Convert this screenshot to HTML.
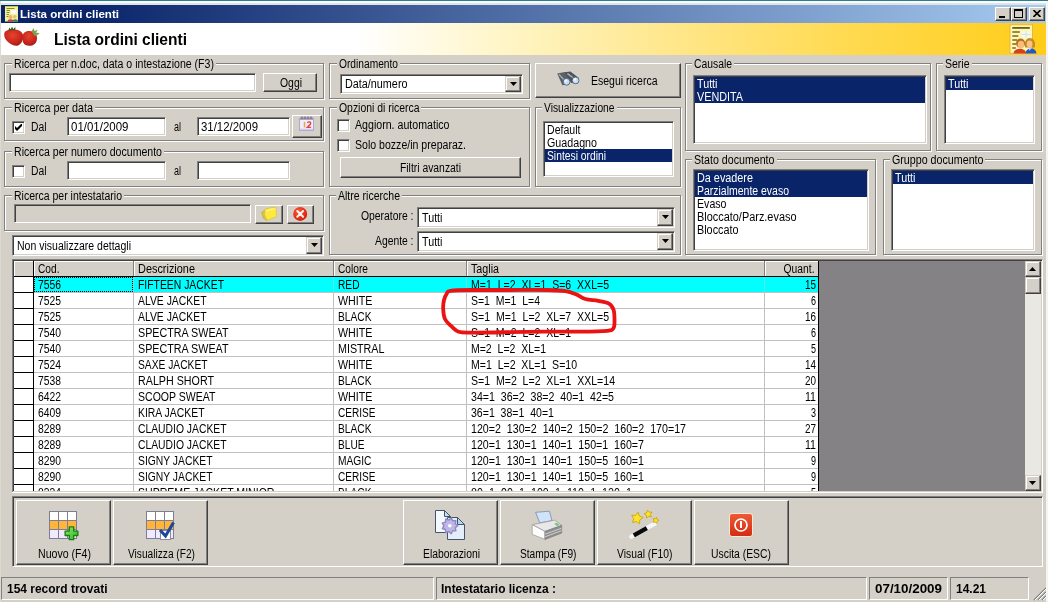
<!DOCTYPE html>
<html><head><meta charset="utf-8"><title>Lista ordini clienti</title>
<style>
html,body{margin:0;padding:0;background:#d4d0c8;}
#w{will-change:transform;position:relative;width:1048px;height:602px;overflow:hidden;font:12.5px 'Liberation Sans',sans-serif;}
#w div,#w svg,#w span.t{position:absolute;box-sizing:border-box;}
#w span.t{white-space:pre;line-height:16px;height:16px;}
</style></head><body><div id="w">
<div style="left:0px;top:0px;width:1048px;height:602px;background:#d4d0c8;"></div>
<div style="left:0px;top:0px;width:1048px;height:1px;background:#2b7f8c;"></div>
<div style="left:0px;top:1px;width:1048px;height:2px;background:#fbfcfd;"></div>
<div style="left:0px;top:3px;width:1048px;height:2px;background:#dfe4ea;"></div>
<div style="left:0px;top:1px;width:1px;height:601px;background:#dcdad2;"></div>
<div style="left:1046px;top:1px;width:2px;height:601px;background:#f4f4f0;"></div>
<div style="left:1px;top:5px;width:1045px;height:18px;background:linear-gradient(90deg,#0a246a 0%,#0a246a 8%,#a6caf0 100%);"></div>
<span class="t" style="left:20px;transform-origin:0 0;top:8.00px;font:bold 11px 'Liberation Sans',sans-serif;color:#fff;transform:scaleX(1.0518)">Lista ordini clienti</span>
<div style="left:1px;top:23px;width:1045px;height:32px;background:linear-gradient(90deg,#fff 0%,#fff 34%,#fff4c0 50%,#ffe688 65%,#ffdb54 80%,#ffcd18 100%);"></div>
<span class="t" style="left:54px;transform-origin:0 0;top:31.00px;font:bold 16px 'Liberation Sans',sans-serif;color:#000;transform:scaleX(0.9715)">Lista ordini clienti</span>
<div style="left:4px;top:63px;width:320px;height:36px;border:1px solid #808080;box-shadow:inset 1px 1px 0 #fff,1px 1px 0 #fff;"></div>
<div style="left:11.5px;top:57px;width:204.0px;height:14px;background:#d4d0c8;"></div>
<span class="t" style="left:13.5px;transform-origin:0 0;top:57.00px;font:normal 12.5px 'Liberation Sans',sans-serif;color:#000;transform:scaleX(0.8466)">Ricerca per n.doc, data o intestazione (F3)</span>
<div style="left:9px;top:73px;width:247px;height:19px;border:1px solid;border-color:#808080 #fff #fff #808080;box-shadow:inset 1px 1px 0 #404040,inset -1px -1px 0 #d4d0c8;background:#fff;"></div>
<div style="left:263px;top:73px;width:54px;height:19px;border:1px solid;border-color:#fff #404040 #404040 #fff;box-shadow:inset -1px -1px 0 #808080,inset 1px 1px 0 #d4d0c8;background:#d4d0c8;"></div>
<span class="t" style="left:280px;transform-origin:0 0;top:76.00px;font:normal 12.5px 'Liberation Sans',sans-serif;color:#000;transform:scaleX(0.8331)">Oggi</span>
<div style="left:4px;top:107px;width:320px;height:34px;border:1px solid #808080;box-shadow:inset 1px 1px 0 #fff,1px 1px 0 #fff;"></div>
<div style="left:11.5px;top:101px;width:83.0px;height:14px;background:#d4d0c8;"></div>
<span class="t" style="left:13.5px;transform-origin:0 0;top:101.00px;font:normal 12.5px 'Liberation Sans',sans-serif;color:#000;transform:scaleX(0.8613)">Ricerca per data</span>
<div style="left:12px;top:121px;width:13px;height:13px;border:1px solid;border-color:#808080 #fff #fff #808080;box-shadow:inset 1px 1px 0 #404040,inset -1px -1px 0 #d4d0c8;background:#fff;"></div>
<svg style="left:15px;top:124px" width="7" height="7"><path d="M0 2v3l2 2 5-5V-1L2 4z" fill="#000"/></svg>
<span class="t" style="left:30.5px;transform-origin:0 0;top:120.00px;font:normal 12.5px 'Liberation Sans',sans-serif;color:#000;transform:scaleX(0.8260)">Dal</span>
<div style="left:67px;top:117px;width:99px;height:19px;border:1px solid;border-color:#808080 #fff #fff #808080;box-shadow:inset 1px 1px 0 #404040,inset -1px -1px 0 #d4d0c8;background:#fff;"></div>
<span class="t" style="left:71px;transform-origin:0 0;top:120.00px;font:normal 12.5px 'Liberation Sans',sans-serif;color:#000;transform:scaleX(0.9191)">01/01/2009</span>
<span class="t" style="left:174px;transform-origin:0 0;top:120.00px;font:normal 12.5px 'Liberation Sans',sans-serif;color:#000;transform:scaleX(0.7191)">al</span>
<div style="left:197px;top:117px;width:93px;height:19px;border:1px solid;border-color:#808080 #fff #fff #808080;box-shadow:inset 1px 1px 0 #404040,inset -1px -1px 0 #d4d0c8;background:#fff;"></div>
<span class="t" style="left:201px;transform-origin:0 0;top:120.00px;font:normal 12.5px 'Liberation Sans',sans-serif;color:#000;transform:scaleX(0.9111)">31/12/2009</span>
<div style="left:292px;top:115px;width:30px;height:23px;border:1px solid;border-color:#fff #404040 #404040 #fff;box-shadow:inset -1px -1px 0 #808080,inset 1px 1px 0 #d4d0c8;background:#d4d0c8;"></div>
<div style="left:4px;top:151px;width:320px;height:36px;border:1px solid #808080;box-shadow:inset 1px 1px 0 #fff,1px 1px 0 #fff;"></div>
<div style="left:11.5px;top:145px;width:152.0px;height:14px;background:#d4d0c8;"></div>
<span class="t" style="left:13.5px;transform-origin:0 0;top:145.00px;font:normal 12.5px 'Liberation Sans',sans-serif;color:#000;transform:scaleX(0.8453)">Ricerca per numero documento</span>
<div style="left:12px;top:165px;width:13px;height:13px;border:1px solid;border-color:#808080 #fff #fff #808080;box-shadow:inset 1px 1px 0 #404040,inset -1px -1px 0 #d4d0c8;background:#fff;"></div>
<span class="t" style="left:30.5px;transform-origin:0 0;top:164.00px;font:normal 12.5px 'Liberation Sans',sans-serif;color:#000;transform:scaleX(0.8260)">Dal</span>
<div style="left:67px;top:161px;width:99px;height:19px;border:1px solid;border-color:#808080 #fff #fff #808080;box-shadow:inset 1px 1px 0 #404040,inset -1px -1px 0 #d4d0c8;background:#fff;"></div>
<span class="t" style="left:174px;transform-origin:0 0;top:164.00px;font:normal 12.5px 'Liberation Sans',sans-serif;color:#000;transform:scaleX(0.7191)">al</span>
<div style="left:197px;top:161px;width:93px;height:19px;border:1px solid;border-color:#808080 #fff #fff #808080;box-shadow:inset 1px 1px 0 #404040,inset -1px -1px 0 #d4d0c8;background:#fff;"></div>
<div style="left:4px;top:195px;width:320px;height:36px;border:1px solid #808080;box-shadow:inset 1px 1px 0 #fff,1px 1px 0 #fff;"></div>
<div style="left:11.5px;top:189px;width:112.0px;height:14px;background:#d4d0c8;"></div>
<span class="t" style="left:13.5px;transform-origin:0 0;top:189.00px;font:normal 12.5px 'Liberation Sans',sans-serif;color:#000;transform:scaleX(0.8403)">Ricerca per intestatario</span>
<div style="left:14px;top:204px;width:237px;height:19px;border:1px solid;border-color:#808080 #fff #fff #808080;box-shadow:inset 1px 1px 0 #404040,inset -1px -1px 0 #d4d0c8;background:#d4d0c8;"></div>
<div style="left:255px;top:205px;width:28px;height:19px;border:1px solid;border-color:#fff #404040 #404040 #fff;box-shadow:inset -1px -1px 0 #808080,inset 1px 1px 0 #d4d0c8;background:#d4d0c8;"></div>
<div style="left:287px;top:205px;width:27px;height:19px;border:1px solid;border-color:#fff #404040 #404040 #fff;box-shadow:inset -1px -1px 0 #808080,inset 1px 1px 0 #d4d0c8;background:#d4d0c8;"></div>
<div style="left:12px;top:235px;width:312px;height:21px;border:1px solid;border-color:#808080 #fff #fff #808080;box-shadow:inset 1px 1px 0 #404040,inset -1px -1px 0 #d4d0c8;background:#fff;"></div>
<div style="left:306px;top:237px;width:16px;height:17px;border:1px solid;border-color:#d4d0c8 #404040 #404040 #d4d0c8;box-shadow:inset -1px -1px 0 #808080,inset 1px 1px 0 #fff;background:#d4d0c8;"></div>
<svg style="left:311px;top:243px" width="7" height="4"><path d="M0 0h7L3.5 4z" fill="#000"/></svg>
<span class="t" style="left:16.5px;transform-origin:0 0;top:239.00px;font:normal 12.5px 'Liberation Sans',sans-serif;color:#000;transform:scaleX(0.8413)">Non visualizzare dettagli</span>
<div style="left:329px;top:63px;width:201px;height:36px;border:1px solid #808080;box-shadow:inset 1px 1px 0 #fff,1px 1px 0 #fff;"></div>
<div style="left:336.5px;top:57px;width:63.0px;height:14px;background:#d4d0c8;"></div>
<span class="t" style="left:338.5px;transform-origin:0 0;top:57.00px;font:normal 12.5px 'Liberation Sans',sans-serif;color:#000;transform:scaleX(0.8164)">Ordinamento</span>
<div style="left:340px;top:74px;width:183px;height:20px;border:1px solid;border-color:#808080 #fff #fff #808080;box-shadow:inset 1px 1px 0 #404040,inset -1px -1px 0 #d4d0c8;background:#fff;"></div>
<div style="left:505px;top:76px;width:16px;height:16px;border:1px solid;border-color:#d4d0c8 #404040 #404040 #d4d0c8;box-shadow:inset -1px -1px 0 #808080,inset 1px 1px 0 #fff;background:#d4d0c8;"></div>
<svg style="left:510px;top:82px" width="7" height="4"><path d="M0 0h7L3.5 4z" fill="#000"/></svg>
<span class="t" style="left:344.5px;transform-origin:0 0;top:77.00px;font:normal 12.5px 'Liberation Sans',sans-serif;color:#000;transform:scaleX(0.8649)">Data/numero</span>
<div style="left:535px;top:63px;width:146px;height:35px;border:1px solid;border-color:#fff #404040 #404040 #fff;box-shadow:inset -1px -1px 0 #808080,inset 1px 1px 0 #d4d0c8;background:#d4d0c8;"></div>
<span class="t" style="left:590.5px;transform-origin:0 0;top:74.00px;font:normal 12.5px 'Liberation Sans',sans-serif;color:#000;transform:scaleX(0.8396)">Esegui ricerca</span>
<div style="left:329px;top:107px;width:201px;height:80px;border:1px solid #808080;box-shadow:inset 1px 1px 0 #fff,1px 1px 0 #fff;"></div>
<div style="left:336.5px;top:101px;width:84.5px;height:14px;background:#d4d0c8;"></div>
<span class="t" style="left:338.5px;transform-origin:0 0;top:101.00px;font:normal 12.5px 'Liberation Sans',sans-serif;color:#000;transform:scaleX(0.8335)">Opzioni di ricerca</span>
<div style="left:337px;top:119px;width:13px;height:13px;border:1px solid;border-color:#808080 #fff #fff #808080;box-shadow:inset 1px 1px 0 #404040,inset -1px -1px 0 #d4d0c8;background:#fff;"></div>
<span class="t" style="left:355px;transform-origin:0 0;top:118.00px;font:normal 12.5px 'Liberation Sans',sans-serif;color:#000;transform:scaleX(0.8499)">Aggiorn. automatico</span>
<div style="left:337px;top:139px;width:13px;height:13px;border:1px solid;border-color:#808080 #fff #fff #808080;box-shadow:inset 1px 1px 0 #404040,inset -1px -1px 0 #d4d0c8;background:#fff;"></div>
<span class="t" style="left:355px;transform-origin:0 0;top:138.00px;font:normal 12.5px 'Liberation Sans',sans-serif;color:#000;transform:scaleX(0.8451)">Solo bozze/in preparaz.</span>
<div style="left:340px;top:157px;width:181px;height:21px;border:1px solid;border-color:#fff #404040 #404040 #fff;box-shadow:inset -1px -1px 0 #808080,inset 1px 1px 0 #d4d0c8;background:#d4d0c8;"></div>
<span class="t" style="left:399.5px;transform-origin:0 0;top:161.00px;font:normal 12.5px 'Liberation Sans',sans-serif;color:#000;transform:scaleX(0.8283)">Filtri avanzati</span>
<div style="left:535px;top:107px;width:146px;height:80px;border:1px solid #808080;box-shadow:inset 1px 1px 0 #fff,1px 1px 0 #fff;"></div>
<div style="left:542.0px;top:101px;width:74.5px;height:14px;background:#d4d0c8;"></div>
<span class="t" style="left:544.0px;transform-origin:0 0;top:101.00px;font:normal 12.5px 'Liberation Sans',sans-serif;color:#000;transform:scaleX(0.8204)">Visualizzazione</span>
<div style="left:543px;top:121px;width:131px;height:56px;border:1px solid;border-color:#808080 #fff #fff #808080;box-shadow:inset 1px 1px 0 #404040,inset -1px -1px 0 #d4d0c8;background:#fff;"></div>
<span class="t" style="left:547.0px;transform-origin:0 0;top:123.00px;font:normal 12.5px 'Liberation Sans',sans-serif;color:#000;transform:scaleX(0.8458)">Default</span>
<span class="t" style="left:547.0px;transform-origin:0 0;top:136.00px;font:normal 12.5px 'Liberation Sans',sans-serif;color:#000;transform:scaleX(0.8563)">Guadagno</span>
<div style="left:545px;top:149px;width:127px;height:13px;background:#0a246a;"></div>
<span class="t" style="left:547.0px;transform-origin:0 0;top:149.00px;font:normal 12.5px 'Liberation Sans',sans-serif;color:#fff;transform:scaleX(0.8243)">Sintesi ordini</span>
<div style="left:329px;top:195px;width:352px;height:60px;border:1px solid #808080;box-shadow:inset 1px 1px 0 #fff,1px 1px 0 #fff;"></div>
<div style="left:335.5px;top:189px;width:66.0px;height:14px;background:#d4d0c8;"></div>
<span class="t" style="left:337.5px;transform-origin:0 0;top:189.00px;font:normal 12.5px 'Liberation Sans',sans-serif;color:#000;transform:scaleX(0.8419)">Altre ricerche</span>
<span class="t" style="left:361px;transform-origin:0 0;top:209.00px;font:normal 12.5px 'Liberation Sans',sans-serif;color:#000;transform:scaleX(0.8302)">Operatore :</span>
<div style="left:417px;top:207px;width:258px;height:21px;border:1px solid;border-color:#808080 #fff #fff #808080;box-shadow:inset 1px 1px 0 #404040,inset -1px -1px 0 #d4d0c8;background:#fff;"></div>
<div style="left:657px;top:209px;width:16px;height:17px;border:1px solid;border-color:#d4d0c8 #404040 #404040 #d4d0c8;box-shadow:inset -1px -1px 0 #808080,inset 1px 1px 0 #fff;background:#d4d0c8;"></div>
<svg style="left:662px;top:215px" width="7" height="4"><path d="M0 0h7L3.5 4z" fill="#000"/></svg>
<span class="t" style="left:422px;transform-origin:0 0;top:211.00px;font:normal 12.5px 'Liberation Sans',sans-serif;color:#000;transform:scaleX(0.8592)">Tutti</span>
<span class="t" style="left:375px;transform-origin:0 0;top:234.00px;font:normal 12.5px 'Liberation Sans',sans-serif;color:#000;transform:scaleX(0.8266)">Agente :</span>
<div style="left:417px;top:231px;width:258px;height:21px;border:1px solid;border-color:#808080 #fff #fff #808080;box-shadow:inset 1px 1px 0 #404040,inset -1px -1px 0 #d4d0c8;background:#fff;"></div>
<div style="left:657px;top:233px;width:16px;height:17px;border:1px solid;border-color:#d4d0c8 #404040 #404040 #d4d0c8;box-shadow:inset -1px -1px 0 #808080,inset 1px 1px 0 #fff;background:#d4d0c8;"></div>
<svg style="left:662px;top:239px" width="7" height="4"><path d="M0 0h7L3.5 4z" fill="#000"/></svg>
<span class="t" style="left:422px;transform-origin:0 0;top:235.00px;font:normal 12.5px 'Liberation Sans',sans-serif;color:#000;transform:scaleX(0.8592)">Tutti</span>
<div style="left:685px;top:63px;width:246px;height:88px;border:1px solid #808080;box-shadow:inset 1px 1px 0 #fff,1px 1px 0 #fff;"></div>
<div style="left:692.0px;top:57px;width:42.0px;height:14px;background:#d4d0c8;"></div>
<span class="t" style="left:694.0px;transform-origin:0 0;top:57.00px;font:normal 12.5px 'Liberation Sans',sans-serif;color:#000;transform:scaleX(0.8283)">Causale</span>
<div style="left:693px;top:75px;width:234px;height:69px;border:1px solid;border-color:#808080 #fff #fff #808080;box-shadow:inset 1px 1px 0 #404040,inset -1px -1px 0 #d4d0c8;background:#fff;"></div>
<div style="left:695px;top:77px;width:230px;height:13px;background:#0a246a;"></div>
<span class="t" style="left:697.0px;transform-origin:0 0;top:77.00px;font:normal 12.5px 'Liberation Sans',sans-serif;color:#fff;transform:scaleX(0.8592)">Tutti</span>
<div style="left:695px;top:90px;width:230px;height:13px;background:#0a246a;"></div>
<span class="t" style="left:697.0px;transform-origin:0 0;top:90.00px;font:normal 12.5px 'Liberation Sans',sans-serif;color:#fff;transform:scaleX(0.8638)">VENDITA</span>
<div style="left:936px;top:63px;width:106px;height:88px;border:1px solid #808080;box-shadow:inset 1px 1px 0 #fff,1px 1px 0 #fff;"></div>
<div style="left:943.0px;top:57px;width:28.5px;height:14px;background:#d4d0c8;"></div>
<span class="t" style="left:945.0px;transform-origin:0 0;top:57.00px;font:normal 12.5px 'Liberation Sans',sans-serif;color:#000;transform:scaleX(0.8394)">Serie</span>
<div style="left:944px;top:75px;width:91px;height:69px;border:1px solid;border-color:#808080 #fff #fff #808080;box-shadow:inset 1px 1px 0 #404040,inset -1px -1px 0 #d4d0c8;background:#fff;"></div>
<div style="left:946px;top:77px;width:87px;height:13px;background:#0a246a;"></div>
<span class="t" style="left:948.0px;transform-origin:0 0;top:77.00px;font:normal 12.5px 'Liberation Sans',sans-serif;color:#fff;transform:scaleX(0.8592)">Tutti</span>
<div style="left:685px;top:159px;width:191px;height:96px;border:1px solid #808080;box-shadow:inset 1px 1px 0 #fff,1px 1px 0 #fff;"></div>
<div style="left:692.0px;top:153px;width:84.5px;height:14px;background:#d4d0c8;"></div>
<span class="t" style="left:694.0px;transform-origin:0 0;top:153.00px;font:normal 12.5px 'Liberation Sans',sans-serif;color:#000;transform:scaleX(0.8517)">Stato documento</span>
<div style="left:693px;top:169px;width:176px;height:82px;border:1px solid;border-color:#808080 #fff #fff #808080;box-shadow:inset 1px 1px 0 #404040,inset -1px -1px 0 #d4d0c8;background:#fff;"></div>
<div style="left:695px;top:171px;width:172px;height:13px;background:#0a246a;"></div>
<span class="t" style="left:697.0px;transform-origin:0 0;top:171.00px;font:normal 12.5px 'Liberation Sans',sans-serif;color:#fff;transform:scaleX(0.8665)">Da evadere</span>
<div style="left:695px;top:184px;width:172px;height:13px;background:#0a246a;"></div>
<span class="t" style="left:697.0px;transform-origin:0 0;top:184.00px;font:normal 12.5px 'Liberation Sans',sans-serif;color:#fff;transform:scaleX(0.8380)">Parzialmente evaso</span>
<span class="t" style="left:697.0px;transform-origin:0 0;top:197.00px;font:normal 12.5px 'Liberation Sans',sans-serif;color:#000;transform:scaleX(0.8489)">Evaso</span>
<span class="t" style="left:697.0px;transform-origin:0 0;top:210.00px;font:normal 12.5px 'Liberation Sans',sans-serif;color:#000;transform:scaleX(0.8732)">Bloccato/Parz.evaso</span>
<span class="t" style="left:697.0px;transform-origin:0 0;top:223.00px;font:normal 12.5px 'Liberation Sans',sans-serif;color:#000;transform:scaleX(0.8654)">Bloccato</span>
<div style="left:883px;top:159px;width:159px;height:96px;border:1px solid #808080;box-shadow:inset 1px 1px 0 #fff,1px 1px 0 #fff;"></div>
<div style="left:889.5px;top:153px;width:95.5px;height:14px;background:#d4d0c8;"></div>
<span class="t" style="left:891.5px;transform-origin:0 0;top:153.00px;font:normal 12.5px 'Liberation Sans',sans-serif;color:#000;transform:scaleX(0.8550)">Gruppo documento</span>
<div style="left:891px;top:169px;width:144px;height:82px;border:1px solid;border-color:#808080 #fff #fff #808080;box-shadow:inset 1px 1px 0 #404040,inset -1px -1px 0 #d4d0c8;background:#fff;"></div>
<div style="left:893px;top:171px;width:140px;height:13px;background:#0a246a;"></div>
<span class="t" style="left:895.0px;transform-origin:0 0;top:171.00px;font:normal 12.5px 'Liberation Sans',sans-serif;color:#fff;transform:scaleX(0.8592)">Tutti</span>
<div style="left:12px;top:259px;width:1031px;height:234px;border:1px solid;border-color:#808080 #fff #fff #808080;box-shadow:inset 1px 1px 0 #404040,inset -1px -1px 0 #d4d0c8;background:#848284;"></div>
<div style="left:14px;top:261px;width:805px;height:15px;background:#d4d0c8;"></div>
<div style="left:14px;top:261px;width:805px;height:1px;background:#fff;"></div>
<div style="left:14px;top:277px;width:805px;height:214px;background:#fff;"></div>
<div style="left:34px;top:277px;width:784px;height:15px;background:#00ffff;"></div>
<div style="left:34px;top:292px;width:785px;height:1px;background:#c0c0c0;"></div>
<div style="left:14px;top:292px;width:20px;height:1px;background:#000;"></div>
<div style="left:34px;top:308px;width:785px;height:1px;background:#c0c0c0;"></div>
<div style="left:14px;top:308px;width:20px;height:1px;background:#000;"></div>
<div style="left:34px;top:324px;width:785px;height:1px;background:#c0c0c0;"></div>
<div style="left:14px;top:324px;width:20px;height:1px;background:#000;"></div>
<div style="left:34px;top:340px;width:785px;height:1px;background:#c0c0c0;"></div>
<div style="left:14px;top:340px;width:20px;height:1px;background:#000;"></div>
<div style="left:34px;top:356px;width:785px;height:1px;background:#c0c0c0;"></div>
<div style="left:14px;top:356px;width:20px;height:1px;background:#000;"></div>
<div style="left:34px;top:372px;width:785px;height:1px;background:#c0c0c0;"></div>
<div style="left:14px;top:372px;width:20px;height:1px;background:#000;"></div>
<div style="left:34px;top:388px;width:785px;height:1px;background:#c0c0c0;"></div>
<div style="left:14px;top:388px;width:20px;height:1px;background:#000;"></div>
<div style="left:34px;top:404px;width:785px;height:1px;background:#c0c0c0;"></div>
<div style="left:14px;top:404px;width:20px;height:1px;background:#000;"></div>
<div style="left:34px;top:420px;width:785px;height:1px;background:#c0c0c0;"></div>
<div style="left:14px;top:420px;width:20px;height:1px;background:#000;"></div>
<div style="left:34px;top:436px;width:785px;height:1px;background:#c0c0c0;"></div>
<div style="left:14px;top:436px;width:20px;height:1px;background:#000;"></div>
<div style="left:34px;top:452px;width:785px;height:1px;background:#c0c0c0;"></div>
<div style="left:14px;top:452px;width:20px;height:1px;background:#000;"></div>
<div style="left:34px;top:468px;width:785px;height:1px;background:#c0c0c0;"></div>
<div style="left:14px;top:468px;width:20px;height:1px;background:#000;"></div>
<div style="left:34px;top:484px;width:785px;height:1px;background:#c0c0c0;"></div>
<div style="left:14px;top:484px;width:20px;height:1px;background:#000;"></div>
<div style="left:14px;top:276px;width:805px;height:1px;background:#000;"></div>
<div style="left:33px;top:261px;width:1px;height:230px;background:#000;"></div>
<div style="left:14px;top:262px;width:1px;height:14px;background:#fff;"></div>
<div style="left:133px;top:277px;width:1px;height:214px;background:#c0c0c0;"></div>
<div style="left:133px;top:261px;width:1px;height:15px;background:#808080;"></div>
<div style="left:333px;top:277px;width:1px;height:214px;background:#c0c0c0;"></div>
<div style="left:333px;top:261px;width:1px;height:15px;background:#808080;"></div>
<div style="left:466px;top:277px;width:1px;height:214px;background:#c0c0c0;"></div>
<div style="left:466px;top:261px;width:1px;height:15px;background:#808080;"></div>
<div style="left:764px;top:277px;width:1px;height:214px;background:#c0c0c0;"></div>
<div style="left:764px;top:261px;width:1px;height:15px;background:#808080;"></div>
<div style="left:818px;top:277px;width:1px;height:214px;background:#c0c0c0;"></div>
<div style="left:818px;top:261px;width:1px;height:15px;background:#808080;"></div>
<div style="left:34px;top:262px;width:1px;height:14px;background:#fff;"></div>
<div style="left:134px;top:262px;width:1px;height:14px;background:#fff;"></div>
<div style="left:334px;top:262px;width:1px;height:14px;background:#fff;"></div>
<div style="left:467px;top:262px;width:1px;height:14px;background:#fff;"></div>
<div style="left:765px;top:262px;width:1px;height:14px;background:#fff;"></div>
<div style="left:818px;top:261px;width:1px;height:230px;background:#000;"></div>
<div style="left:133px;top:277px;width:1px;height:15px;background:#5ce6e6;"></div>
<div style="left:333px;top:277px;width:1px;height:15px;background:#5ce6e6;"></div>
<div style="left:466px;top:277px;width:1px;height:15px;background:#5ce6e6;"></div>
<div style="left:764px;top:277px;width:1px;height:15px;background:#5ce6e6;"></div>
<div style="left:34px;top:277px;width:99px;height:15px;border:1px dotted #000;"></div>
<span class="t" style="left:38px;transform-origin:0 0;top:262.00px;font:normal 12.5px 'Liberation Sans',sans-serif;color:#000;transform:scaleX(0.8142)">Cod.</span>
<span class="t" style="left:137.5px;transform-origin:0 0;top:262.00px;font:normal 12.5px 'Liberation Sans',sans-serif;color:#000;transform:scaleX(0.8727)">Descrizione</span>
<span class="t" style="left:337.5px;transform-origin:0 0;top:262.00px;font:normal 12.5px 'Liberation Sans',sans-serif;color:#000;transform:scaleX(0.8146)">Colore</span>
<span class="t" style="left:471px;transform-origin:0 0;top:262.00px;font:normal 12.5px 'Liberation Sans',sans-serif;color:#000;transform:scaleX(0.8570)">Taglia</span>
<span class="t" style="right:233px;transform-origin:100% 0;top:262.00px;font:normal 12.5px 'Liberation Sans',sans-serif;color:#000;transform:scaleX(0.8260)">Quant.</span>
<span class="t" style="left:38px;transform-origin:0 0;top:278.00px;font:normal 12.5px 'Liberation Sans',sans-serif;color:#000;transform:scaleX(0.8270)">7556</span>
<span class="t" style="left:137.5px;transform-origin:0 0;top:278.00px;font:normal 12.5px 'Liberation Sans',sans-serif;color:#000;transform:scaleX(0.8310)">FIFTEEN JACKET</span>
<span class="t" style="left:337.5px;transform-origin:0 0;top:278.00px;font:normal 12.5px 'Liberation Sans',sans-serif;color:#000;transform:scaleX(0.8142)">RED</span>
<span class="t" style="left:470.5px;transform-origin:0 0;top:278.00px;font:normal 12.5px 'Liberation Sans',sans-serif;word-spacing:3.475px;color:#000;transform:scaleX(0.8432)">M=1 L=2 XL=1 S=6 XXL=5</span>
<span class="t" style="right:232.5px;transform-origin:100% 0;top:278.00px;font:normal 12.5px 'Liberation Sans',sans-serif;color:#000;transform:scaleX(0.7910)">15</span>
<span class="t" style="left:38px;transform-origin:0 0;top:294.00px;font:normal 12.5px 'Liberation Sans',sans-serif;color:#000;transform:scaleX(0.8270)">7525</span>
<span class="t" style="left:137.5px;transform-origin:0 0;top:294.00px;font:normal 12.5px 'Liberation Sans',sans-serif;color:#000;transform:scaleX(0.8309)">ALVE JACKET</span>
<span class="t" style="left:337.5px;transform-origin:0 0;top:294.00px;font:normal 12.5px 'Liberation Sans',sans-serif;color:#000;transform:scaleX(0.8565)">WHITE</span>
<span class="t" style="left:470.5px;transform-origin:0 0;top:294.00px;font:normal 12.5px 'Liberation Sans',sans-serif;word-spacing:3.475px;color:#000;transform:scaleX(0.8378)">S=1 M=1 L=4</span>
<span class="t" style="right:232.5px;transform-origin:100% 0;top:294.00px;font:normal 12.5px 'Liberation Sans',sans-serif;color:#000;transform:scaleX(0.7191)">6</span>
<span class="t" style="left:38px;transform-origin:0 0;top:310.00px;font:normal 12.5px 'Liberation Sans',sans-serif;color:#000;transform:scaleX(0.8270)">7525</span>
<span class="t" style="left:137.5px;transform-origin:0 0;top:310.00px;font:normal 12.5px 'Liberation Sans',sans-serif;color:#000;transform:scaleX(0.8309)">ALVE JACKET</span>
<span class="t" style="left:337.5px;transform-origin:0 0;top:310.00px;font:normal 12.5px 'Liberation Sans',sans-serif;color:#000;transform:scaleX(0.8171)">BLACK</span>
<span class="t" style="left:470.5px;transform-origin:0 0;top:310.00px;font:normal 12.5px 'Liberation Sans',sans-serif;word-spacing:3.475px;color:#000;transform:scaleX(0.8432)">S=1 M=1 L=2 XL=7 XXL=5</span>
<span class="t" style="right:232.5px;transform-origin:100% 0;top:310.00px;font:normal 12.5px 'Liberation Sans',sans-serif;color:#000;transform:scaleX(0.7910)">16</span>
<span class="t" style="left:38px;transform-origin:0 0;top:326.00px;font:normal 12.5px 'Liberation Sans',sans-serif;color:#000;transform:scaleX(0.8270)">7540</span>
<span class="t" style="left:137.5px;transform-origin:0 0;top:326.00px;font:normal 12.5px 'Liberation Sans',sans-serif;color:#000;transform:scaleX(0.8591)">SPECTRA SWEAT</span>
<span class="t" style="left:337.5px;transform-origin:0 0;top:326.00px;font:normal 12.5px 'Liberation Sans',sans-serif;color:#000;transform:scaleX(0.8565)">WHITE</span>
<span class="t" style="left:470.5px;transform-origin:0 0;top:326.00px;font:normal 12.5px 'Liberation Sans',sans-serif;word-spacing:3.475px;color:#000;transform:scaleX(0.8414)">S=1 M=2 L=2 XL=1</span>
<span class="t" style="right:232.5px;transform-origin:100% 0;top:326.00px;font:normal 12.5px 'Liberation Sans',sans-serif;color:#000;transform:scaleX(0.7191)">6</span>
<span class="t" style="left:38px;transform-origin:0 0;top:342.00px;font:normal 12.5px 'Liberation Sans',sans-serif;color:#000;transform:scaleX(0.8270)">7540</span>
<span class="t" style="left:137.5px;transform-origin:0 0;top:342.00px;font:normal 12.5px 'Liberation Sans',sans-serif;color:#000;transform:scaleX(0.8591)">SPECTRA SWEAT</span>
<span class="t" style="left:337.5px;transform-origin:0 0;top:342.00px;font:normal 12.5px 'Liberation Sans',sans-serif;color:#000;transform:scaleX(0.8581)">MISTRAL</span>
<span class="t" style="left:470.5px;transform-origin:0 0;top:342.00px;font:normal 12.5px 'Liberation Sans',sans-serif;word-spacing:3.475px;color:#000;transform:scaleX(0.8397)">M=2 L=2 XL=1</span>
<span class="t" style="right:232.5px;transform-origin:100% 0;top:342.00px;font:normal 12.5px 'Liberation Sans',sans-serif;color:#000;transform:scaleX(0.7191)">5</span>
<span class="t" style="left:38px;transform-origin:0 0;top:358.00px;font:normal 12.5px 'Liberation Sans',sans-serif;color:#000;transform:scaleX(0.8270)">7524</span>
<span class="t" style="left:137.5px;transform-origin:0 0;top:358.00px;font:normal 12.5px 'Liberation Sans',sans-serif;color:#000;transform:scaleX(0.8201)">SAXE JACKET</span>
<span class="t" style="left:337.5px;transform-origin:0 0;top:358.00px;font:normal 12.5px 'Liberation Sans',sans-serif;color:#000;transform:scaleX(0.8565)">WHITE</span>
<span class="t" style="left:470.5px;transform-origin:0 0;top:358.00px;font:normal 12.5px 'Liberation Sans',sans-serif;word-spacing:3.475px;color:#000;transform:scaleX(0.8426)">M=1 L=2 XL=1 S=10</span>
<span class="t" style="right:232.5px;transform-origin:100% 0;top:358.00px;font:normal 12.5px 'Liberation Sans',sans-serif;color:#000;transform:scaleX(0.7910)">14</span>
<span class="t" style="left:38px;transform-origin:0 0;top:374.00px;font:normal 12.5px 'Liberation Sans',sans-serif;color:#000;transform:scaleX(0.8270)">7538</span>
<span class="t" style="left:137.5px;transform-origin:0 0;top:374.00px;font:normal 12.5px 'Liberation Sans',sans-serif;color:#000;transform:scaleX(0.8569)">RALPH SHORT</span>
<span class="t" style="left:337.5px;transform-origin:0 0;top:374.00px;font:normal 12.5px 'Liberation Sans',sans-serif;color:#000;transform:scaleX(0.8171)">BLACK</span>
<span class="t" style="left:470.5px;transform-origin:0 0;top:374.00px;font:normal 12.5px 'Liberation Sans',sans-serif;word-spacing:3.475px;color:#000;transform:scaleX(0.8440)">S=1 M=2 L=2 XL=1 XXL=14</span>
<span class="t" style="right:232.5px;transform-origin:100% 0;top:374.00px;font:normal 12.5px 'Liberation Sans',sans-serif;color:#000;transform:scaleX(0.7910)">20</span>
<span class="t" style="left:38px;transform-origin:0 0;top:390.00px;font:normal 12.5px 'Liberation Sans',sans-serif;color:#000;transform:scaleX(0.8270)">6422</span>
<span class="t" style="left:137.5px;transform-origin:0 0;top:390.00px;font:normal 12.5px 'Liberation Sans',sans-serif;color:#000;transform:scaleX(0.8431)">SCOOP SWEAT</span>
<span class="t" style="left:337.5px;transform-origin:0 0;top:390.00px;font:normal 12.5px 'Liberation Sans',sans-serif;color:#000;transform:scaleX(0.8565)">WHITE</span>
<span class="t" style="left:470.5px;transform-origin:0 0;top:390.00px;font:normal 12.5px 'Liberation Sans',sans-serif;word-spacing:3.475px;color:#000;transform:scaleX(0.8483)">34=1 36=2 38=2 40=1 42=5</span>
<span class="t" style="right:232.5px;transform-origin:100% 0;top:390.00px;font:normal 12.5px 'Liberation Sans',sans-serif;color:#000;transform:scaleX(0.8472)">11</span>
<span class="t" style="left:38px;transform-origin:0 0;top:406.00px;font:normal 12.5px 'Liberation Sans',sans-serif;color:#000;transform:scaleX(0.8270)">6409</span>
<span class="t" style="left:137.5px;transform-origin:0 0;top:406.00px;font:normal 12.5px 'Liberation Sans',sans-serif;color:#000;transform:scaleX(0.8324)">KIRA JACKET</span>
<span class="t" style="left:337.5px;transform-origin:0 0;top:406.00px;font:normal 12.5px 'Liberation Sans',sans-serif;color:#000;transform:scaleX(0.8056)">CERISE</span>
<span class="t" style="left:470.5px;transform-origin:0 0;top:406.00px;font:normal 12.5px 'Liberation Sans',sans-serif;word-spacing:3.475px;color:#000;transform:scaleX(0.8437)">36=1 38=1 40=1</span>
<span class="t" style="right:232.5px;transform-origin:100% 0;top:406.00px;font:normal 12.5px 'Liberation Sans',sans-serif;color:#000;transform:scaleX(0.7191)">3</span>
<span class="t" style="left:38px;transform-origin:0 0;top:422.00px;font:normal 12.5px 'Liberation Sans',sans-serif;color:#000;transform:scaleX(0.8270)">8289</span>
<span class="t" style="left:137.5px;transform-origin:0 0;top:422.00px;font:normal 12.5px 'Liberation Sans',sans-serif;color:#000;transform:scaleX(0.8273)">CLAUDIO JACKET</span>
<span class="t" style="left:337.5px;transform-origin:0 0;top:422.00px;font:normal 12.5px 'Liberation Sans',sans-serif;color:#000;transform:scaleX(0.8171)">BLACK</span>
<span class="t" style="left:470.5px;transform-origin:0 0;top:422.00px;font:normal 12.5px 'Liberation Sans',sans-serif;word-spacing:3.475px;color:#000;transform:scaleX(0.8520)">120=2 130=2 140=2 150=2 160=2 170=17</span>
<span class="t" style="right:232.5px;transform-origin:100% 0;top:422.00px;font:normal 12.5px 'Liberation Sans',sans-serif;color:#000;transform:scaleX(0.7910)">27</span>
<span class="t" style="left:38px;transform-origin:0 0;top:438.00px;font:normal 12.5px 'Liberation Sans',sans-serif;color:#000;transform:scaleX(0.8270)">8289</span>
<span class="t" style="left:137.5px;transform-origin:0 0;top:438.00px;font:normal 12.5px 'Liberation Sans',sans-serif;color:#000;transform:scaleX(0.8273)">CLAUDIO JACKET</span>
<span class="t" style="left:337.5px;transform-origin:0 0;top:438.00px;font:normal 12.5px 'Liberation Sans',sans-serif;color:#000;transform:scaleX(0.8115)">BLUE</span>
<span class="t" style="left:470.5px;transform-origin:0 0;top:438.00px;font:normal 12.5px 'Liberation Sans',sans-serif;word-spacing:3.475px;color:#000;transform:scaleX(0.8508)">120=1 130=1 140=1 150=1 160=7</span>
<span class="t" style="right:232.5px;transform-origin:100% 0;top:438.00px;font:normal 12.5px 'Liberation Sans',sans-serif;color:#000;transform:scaleX(0.8472)">11</span>
<span class="t" style="left:38px;transform-origin:0 0;top:454.00px;font:normal 12.5px 'Liberation Sans',sans-serif;color:#000;transform:scaleX(0.8270)">8290</span>
<span class="t" style="left:137.5px;transform-origin:0 0;top:454.00px;font:normal 12.5px 'Liberation Sans',sans-serif;color:#000;transform:scaleX(0.8271)">SIGNY JACKET</span>
<span class="t" style="left:337.5px;transform-origin:0 0;top:454.00px;font:normal 12.5px 'Liberation Sans',sans-serif;color:#000;transform:scaleX(0.8174)">MAGIC</span>
<span class="t" style="left:470.5px;transform-origin:0 0;top:454.00px;font:normal 12.5px 'Liberation Sans',sans-serif;word-spacing:3.475px;color:#000;transform:scaleX(0.8508)">120=1 130=1 140=1 150=5 160=1</span>
<span class="t" style="right:232.5px;transform-origin:100% 0;top:454.00px;font:normal 12.5px 'Liberation Sans',sans-serif;color:#000;transform:scaleX(0.7191)">9</span>
<span class="t" style="left:38px;transform-origin:0 0;top:470.00px;font:normal 12.5px 'Liberation Sans',sans-serif;color:#000;transform:scaleX(0.8270)">8290</span>
<span class="t" style="left:137.5px;transform-origin:0 0;top:470.00px;font:normal 12.5px 'Liberation Sans',sans-serif;color:#000;transform:scaleX(0.8271)">SIGNY JACKET</span>
<span class="t" style="left:337.5px;transform-origin:0 0;top:470.00px;font:normal 12.5px 'Liberation Sans',sans-serif;color:#000;transform:scaleX(0.8056)">CERISE</span>
<span class="t" style="left:470.5px;transform-origin:0 0;top:470.00px;font:normal 12.5px 'Liberation Sans',sans-serif;word-spacing:3.475px;color:#000;transform:scaleX(0.8508)">120=1 130=1 140=1 150=5 160=1</span>
<span class="t" style="right:232.5px;transform-origin:100% 0;top:470.00px;font:normal 12.5px 'Liberation Sans',sans-serif;color:#000;transform:scaleX(0.7191)">9</span>
<span class="t" style="left:38px;transform-origin:0 0;top:486.00px;font:normal 12.5px 'Liberation Sans',sans-serif;color:#000;transform:scaleX(0.8270)">8334</span>
<span class="t" style="left:137.5px;transform-origin:0 0;top:486.00px;font:normal 12.5px 'Liberation Sans',sans-serif;color:#000;transform:scaleX(0.8446)">SUPREME JACKET MINIOR</span>
<span class="t" style="left:337.5px;transform-origin:0 0;top:486.00px;font:normal 12.5px 'Liberation Sans',sans-serif;color:#000;transform:scaleX(0.8171)">BLACK</span>
<span class="t" style="left:470.5px;transform-origin:0 0;top:486.00px;font:normal 12.5px 'Liberation Sans',sans-serif;word-spacing:3.475px;color:#000;transform:scaleX(0.8541)">80=1 90=1 100=1 110=1 120=1</span>
<span class="t" style="right:232.5px;transform-origin:100% 0;top:486.00px;font:normal 12.5px 'Liberation Sans',sans-serif;color:#000;transform:scaleX(0.7191)">5</span>
<div style="left:13px;top:491px;width:1029px;height:1px;background:#d4d0c8;"></div>
<div style="left:12px;top:492px;width:1031px;height:1px;background:#fff;"></div>
<div style="left:2px;top:493px;width:1044px;height:3px;background:#d4d0c8;"></div>
<div style="left:1025px;top:261px;width:16px;height:230px;background:#eae8e3;"></div>
<div style="left:1025px;top:261px;width:16px;height:16px;border:1px solid;border-color:#d4d0c8 #404040 #404040 #d4d0c8;box-shadow:inset -1px -1px 0 #808080,inset 1px 1px 0 #fff;background:#d4d0c8;"></div>
<svg style="left:1029px;top:267px" width="7" height="4"><path d="M0 4h7L3.5 0z" fill="#000"/></svg>
<div style="left:1025px;top:277px;width:16px;height:17px;border:1px solid;border-color:#d4d0c8 #404040 #404040 #d4d0c8;box-shadow:inset -1px -1px 0 #808080,inset 1px 1px 0 #fff;background:#d4d0c8;"></div>
<div style="left:1025px;top:475px;width:16px;height:16px;border:1px solid;border-color:#d4d0c8 #404040 #404040 #d4d0c8;box-shadow:inset -1px -1px 0 #808080,inset 1px 1px 0 #fff;background:#d4d0c8;"></div>
<svg style="left:1029px;top:481px" width="7" height="4"><path d="M0 0h7L3.5 4z" fill="#000"/></svg>
<div style="left:12px;top:496px;width:1031px;height:71px;border:1px solid;border-color:#808080 #fff #fff #808080;box-shadow:inset 1px 1px 0 #404040,inset -1px -1px 0 #d4d0c8;"></div>
<div style="left:16px;top:500px;width:95px;height:65px;border:1px solid;border-color:#fff #404040 #404040 #fff;box-shadow:inset -1px -1px 0 #808080,inset 1px 1px 0 #d4d0c8;background:#d4d0c8;"></div>
<span class="t" style="left:37.5px;transform-origin:0 0;top:547.00px;font:normal 12.5px 'Liberation Sans',sans-serif;color:#000;transform:scaleX(0.8476)">Nuovo (F4)</span>
<div style="left:113px;top:500px;width:95px;height:65px;border:1px solid;border-color:#fff #404040 #404040 #fff;box-shadow:inset -1px -1px 0 #808080,inset 1px 1px 0 #d4d0c8;background:#d4d0c8;"></div>
<span class="t" style="left:127.5px;transform-origin:0 0;top:547.00px;font:normal 12.5px 'Liberation Sans',sans-serif;color:#000;transform:scaleX(0.8127)">Visualizza (F2)</span>
<div style="left:403px;top:500px;width:95px;height:65px;border:1px solid;border-color:#fff #404040 #404040 #fff;box-shadow:inset -1px -1px 0 #808080,inset 1px 1px 0 #d4d0c8;background:#d4d0c8;"></div>
<span class="t" style="left:422.5px;transform-origin:0 0;top:547.00px;font:normal 12.5px 'Liberation Sans',sans-serif;color:#000;transform:scaleX(0.8285)">Elaborazioni</span>
<div style="left:500px;top:500px;width:95px;height:65px;border:1px solid;border-color:#fff #404040 #404040 #fff;box-shadow:inset -1px -1px 0 #808080,inset 1px 1px 0 #d4d0c8;background:#d4d0c8;"></div>
<span class="t" style="left:519.5px;transform-origin:0 0;top:547.00px;font:normal 12.5px 'Liberation Sans',sans-serif;color:#000;transform:scaleX(0.8133)">Stampa (F9)</span>
<div style="left:597px;top:500px;width:95px;height:65px;border:1px solid;border-color:#fff #404040 #404040 #fff;box-shadow:inset -1px -1px 0 #808080,inset 1px 1px 0 #d4d0c8;background:#d4d0c8;"></div>
<span class="t" style="left:617px;transform-origin:0 0;top:547.00px;font:normal 12.5px 'Liberation Sans',sans-serif;color:#000;transform:scaleX(0.8262)">Visual (F10)</span>
<div style="left:694px;top:500px;width:95px;height:65px;border:1px solid;border-color:#fff #404040 #404040 #fff;box-shadow:inset -1px -1px 0 #808080,inset 1px 1px 0 #d4d0c8;background:#d4d0c8;"></div>
<span class="t" style="left:711px;transform-origin:0 0;top:547.00px;font:normal 12.5px 'Liberation Sans',sans-serif;color:#000;transform:scaleX(0.8306)">Uscita (ESC)</span>
<div style="left:1px;top:577px;width:433px;height:23px;border:1px solid;border-color:#808080 #fff #fff #808080;"></div>
<div style="left:436px;top:577px;width:431px;height:23px;border:1px solid;border-color:#808080 #fff #fff #808080;"></div>
<div style="left:869px;top:577px;width:79px;height:23px;border:1px solid;border-color:#808080 #fff #fff #808080;"></div>
<div style="left:950px;top:577px;width:79px;height:23px;border:1px solid;border-color:#808080 #fff #fff #808080;"></div>
<span class="t" style="left:7px;transform-origin:0 0;top:582.00px;font:bold 12.5px 'Liberation Sans',sans-serif;color:#000;transform:scaleX(0.9579)">154 record trovati</span>
<span class="t" style="left:441px;transform-origin:0 0;top:582.00px;font:bold 12.5px 'Liberation Sans',sans-serif;color:#000;transform:scaleX(0.9568)">Intestatario licenza :</span>
<span class="t" style="left:875px;transform-origin:0 0;top:582.00px;font:bold 12.5px 'Liberation Sans',sans-serif;color:#000;transform:scaleX(1.0709)">07/10/2009</span>
<span class="t" style="left:956px;transform-origin:0 0;top:582.00px;font:bold 12.5px 'Liberation Sans',sans-serif;color:#000;transform:scaleX(0.9590)">14.21</span>
<svg style="left:3px;top:25px" width="39" height="23" viewBox="3 25 39 23"><defs><radialGradient id="sb" cx=".45" cy=".35" r=".75"><stop offset="0" stop-color="#e4442e"/><stop offset=".55" stop-color="#cc281e"/><stop offset="1" stop-color="#9c1610"/></radialGradient></defs><path d="M4.2 34C4.5 31 8 29.3 12.5 29.6C17 29.3 22 30.5 23 35C23.8 39 22 43.5 18 45.6C15 46.5 11 44.5 8 42C5.5 40 4 37 4.2 34z" fill="url(#sb)"/><path d="M22.5 36C23 32.5 26.5 30.6 30 31C34 31 37 34 37 38C37 41.5 35.5 44.5 32 45.4C28 46.2 24.5 45.3 23.2 42.5C22.5 40.5 22.3 38 22.5 36z" fill="url(#sb)"/><path d="M8.5 30.5l0.8-3l1.5 2l1.2-3l1.3 2.8l2-2.6l0 3.2z" fill="#2f5a22"/><path d="M31.5 31.5l2-3.5l1 3l3.2-1.2l-1.6 3l3.6 0.2l-3 2.5l-2 0.5z" fill="#7aa24a"/></svg>
<svg style="left:4px;top:5px" width="15" height="17" viewBox="4 5 15 17"><rect x="5" y="6" width="13" height="15.5" fill="#eef0a8"/><rect x="5" y="6" width="13" height="1" fill="#c8c850"/><path d="M6.5 8.5h8M6.5 10.5h3.5M6.5 12.5h3M6.5 14.5h2.5M6.5 16.5h2" stroke="#8a8c20" stroke-width="1"/><rect x="11" y="10" width="5.5" height="4" fill="#fafaf0"/><circle cx="10.5" cy="17" r="2" fill="#f0b060"/><path d="M7.5 21.5c0-3 6-3 6 0z" fill="#d03820"/><circle cx="14.8" cy="16.8" r="1.8" fill="#e8c070"/><path d="M12.5 21.5c0-3 5.5-3 5.5 0z" fill="#3c7a58"/></svg>
<svg style="left:1008px;top:24px" width="30" height="31" viewBox="1008 24 30 31"><rect x="1010" y="24.8" width="22.5" height="28.5" fill="#fff7b4" stroke="#e8b63a" stroke-width="1"/><rect x="1012.3" y="27" width="17.5" height="1.8" fill="#6a5c12"/><path d="M1012.3 32h7.5M1012.3 36h6M1012.3 40h5M1012.3 44h4M1012.3 48h3.5" stroke="#7a6a18" stroke-width="1.3"/><rect x="1021.5" y="31" width="9.5" height="7" fill="#f4f8ee"/><path d="M1021.5 34.5h9.5M1026 31v7" stroke="#d4e0c8" stroke-width=".8"/><path d="M1013.6 53.4c0-6.2 12.4-6.2 12.4 0z" fill="#d3401c"/><circle cx="1020.6" cy="43.2" r="4.6" fill="#b86a22"/><ellipse cx="1021" cy="44.6" rx="3.3" ry="3.8" fill="#f7bd7a"/><path d="M1025.6 53.4c0-6.4 10.8-6.4 10.8 0z" fill="#2456c4"/><path d="M1025.2 47.5c-1.5-6.5 2-9.6 4.6-9.5c3.2 0 6.4 3 5 9.5z" fill="#c98a26"/><ellipse cx="1029.6" cy="44" rx="2.9" ry="3.6" fill="#f7c58a"/><path d="M1028.4 48.2l1.4 2.6l1.4-2.6z" fill="#bfe6ff"/></svg>
<svg style="left:556px;top:70px" width="25" height="17" viewBox="556 70 25 17"><path d="M557.2 73.6l7.6-1.6l5.4 5.6l-2.2 7l-5.6 0.6z" fill="#596068"/><path d="M564.6 72.2l5.8-0.6l8.4 6.4l-1.6 5.6l-6 -0.6z" fill="#4c535b"/><circle cx="566.6" cy="81.8" r="3.4" fill="#c6defb" stroke="#56606c" stroke-width=".9"/><circle cx="575.6" cy="80.4" r="3.4" fill="#c6defb" stroke="#56606c" stroke-width=".9"/><circle cx="565.8" cy="80.8" r="1.3" fill="#f0f7ff"/><circle cx="574.8" cy="79.4" r="1.3" fill="#f0f7ff"/><path d="M559 74.4l4.6 5" stroke="#a9b1ba" stroke-width="1.4"/><path d="M567.4 73.6l5.2 3.8" stroke="#a9b1ba" stroke-width="1.4"/></svg>
<svg style="left:298px;top:115px" width="17" height="17" viewBox="298 115 17 17"><rect x="299.5" y="118.5" width="14" height="12" fill="#f1eefa" stroke="#a9a4cc" stroke-width=".9"/><rect x="300" y="117.4" width="13" height="2.4" fill="#9a95b4"/><path d="M302 116.4v2.6M305 116.4v2.6M308 116.4v2.6M311 116.4v2.6" stroke="#6a6680" stroke-width="1"/><path d="M304.5 121.8v5.6" stroke="#f2a050" stroke-width="1.5"/><path d="M307.3 122.6c1.6-1.4 4-0.6 3.2 1.4l-3.2 3.4h3.8" stroke="#e24646" stroke-width="1.4" fill="none"/><path d="M300 129.4h13" stroke="#cfcaf0" stroke-width="1.4"/></svg>
<svg style="left:260px;top:206px" width="18" height="16" viewBox="260 206 18 16"><path d="M261.6 212.2l3.4-1.8l2 10l-3.4-1.8z" fill="#d9c344" stroke="#b8a430" stroke-width=".6" stroke-linejoin="round"/><path d="M265 209.4l5.5-1.7l5.7-0.4l0.2 9.3l-9.4 3.8l-2.4-5.8z" fill="#ffe93c" stroke="#d8c232" stroke-width=".7" stroke-linejoin="round"/><path d="M266 211l4.6-1.6l4.6-0.4" stroke="#fff8a8" stroke-width="1" fill="none"/></svg>
<svg style="left:292px;top:206px" width="17" height="17" viewBox="292 206 17 17"><defs><radialGradient id="rx" cx=".4" cy=".35" r=".7"><stop offset="0" stop-color="#ff5a3a"/><stop offset="1" stop-color="#d81808"/></radialGradient></defs><circle cx="300.2" cy="213.9" r="7" fill="url(#rx)"/><path d="M297.3 211l5.8 5.8M303.1 211l-5.8 5.8" stroke="#fff4ec" stroke-width="2" stroke-linecap="round"/></svg>
<svg style="left:48px;top:510px" width="34" height="34" viewBox="48 510 34 34"><rect x="49.5" y="511.5" width="27" height="27" fill="#fff" stroke="#7d7d95"/><rect x="50" y="521" width="26" height="8" fill="#ffb43a"/><rect x="50" y="530" width="26" height="8" fill="#efeaff"/><path d="M58.5 512v26M67.5 512v26M50 520.5h26M50 529.5h26" stroke="#7d7d95" fill="none"/><defs><linearGradient id="pg" x1="0" y1="0" x2="1" y2="1"><stop offset="0" stop-color="#8aec6a"/><stop offset="1" stop-color="#27b81a"/></linearGradient></defs><path d="M69.3 526.9h4.4v4.2h4.2v4.4h-4.2v4.2h-4.4v-4.2h-4.2v-4.4h4.2z" fill="url(#pg)" stroke="#1c7a1c" stroke-width="1.3" stroke-linejoin="round"/></svg>
<svg style="left:145px;top:508px" width="34" height="36" viewBox="145 508 34 36"><rect x="146.5" y="511.5" width="27" height="27" fill="#fff" stroke="#7d7d95"/><rect x="147" y="521" width="26" height="8" fill="#ffb43a"/><rect x="147" y="530" width="26" height="8" fill="#efeaff"/><path d="M155.5 512v26M164.5 512v26M147 520.5h26M147 529.5h26" stroke="#7d7d95" fill="none"/><rect x="160.5" y="530.5" width="10" height="9" fill="#fff" stroke="#8a8a9a"/><path d="M160 530l5.5 6 8-13.5" fill="none" stroke="#1c4796" stroke-width="3" stroke-linejoin="miter"/></svg>
<svg style="left:433px;top:508px" width="34" height="34" viewBox="433 508 34 34"><path d="M435.5 510.5h9l6 6v16h-15z" fill="#f4f8ff" stroke="#44546c"/><path d="M444.5 510.5v6h6z" fill="#c4dcf4" stroke="#44546c" stroke-linejoin="round"/><path d="M447.5 517.5h10l7 7v15h-17z" fill="#e4eefa" stroke="#44546c"/><path d="M457.5 517.5v7h7z" fill="#b8d4f0" stroke="#44546c" stroke-linejoin="round"/><polygon points="457.8,525.8 455.3,527.8 455.9,530.9 452.7,530.8 451.2,533.7 448.8,531.5 445.8,532.7 445.4,529.5 442.3,528.5 444.0,525.8 442.3,523.1 445.4,522.1 445.8,518.9 448.8,520.1 451.2,517.9 452.7,520.8 455.9,520.7 455.3,523.8" fill="#bdb6e6" stroke="#8f88c4" stroke-width="1.4" stroke-linejoin="round"/><circle cx="449.8" cy="525.8" r="1.8" fill="#fff"/></svg>
<svg style="left:530px;top:509px" width="34" height="33" viewBox="530 509 34 33"><path d="M535.6 512.3l13.8-1.1l2.6 9.4l-12.3 2.2z" fill="#cfe4fb" stroke="#7a8aa0" stroke-width=".8"/><path d="M532.2 524.7l22.4-4.5l7.1 5.2l-16.7 6z" fill="#e8e8e8" stroke="#a0a0a0" stroke-width=".8"/><path d="M532.2 524.7l12.8 6.7v8l-12.8-5z" fill="#fdfdfd" stroke="#a0a0a0" stroke-width=".8"/><path d="M545 531.4l16.7-6v7.6l-16.7 6.4z" fill="#8e8e8e" stroke="#808080" stroke-width=".8"/><path d="M545 534.2l16.7-6M545 536.8l16.7-6.2" stroke="#d0d0d0" stroke-width="1"/><path d="M554 523.6l3-0.7l2.8 2.1l-3 1z" fill="#74c878"/></svg>
<svg style="left:627px;top:508px" width="34" height="33" viewBox="627 508 34 33"><path d="M631.4 536.6L654.8 523.6" stroke="#f6f6f6" stroke-width="4.4" stroke-linecap="round"/><path d="M633.8 535.3L646.8 528.1" stroke="#0a0a0a" stroke-width="4.4"/><polygon points="638.2,512.2 639.4,516.1 643.2,517.6 639.8,519.9 639.6,523.9 636.4,521.5 632.4,522.5 633.8,518.7 631.6,515.3 635.7,515.4" fill="#ffe326" stroke="#c9a512" stroke-width=".9" stroke-linejoin="round"/><polygon points="647.5,510.1 649.2,512.2 652.0,512.1 650.5,514.4 651.4,517.0 648.7,516.3 646.6,518.0 646.4,515.3 644.1,513.7 646.7,512.7" fill="#ffe326" stroke="#c9a512" stroke-width=".9" stroke-linejoin="round"/><polygon points="656.6,517.3 657.0,519.4 658.9,520.4 657.1,521.4 656.7,523.4 655.2,522.0 653.1,522.3 654.0,520.4 653.1,518.6 655.2,518.8" fill="#ffe326" stroke="#c9a512" stroke-width=".9" stroke-linejoin="round"/></svg>
<svg style="left:728px;top:512px" width="26" height="26" viewBox="728 512 26 26"><defs><linearGradient id="ug" x1="0" y1="0" x2="0" y2="1"><stop offset="0" stop-color="#ee5b36"/><stop offset="1" stop-color="#d42a10"/></linearGradient></defs><rect x="729.5" y="513.5" width="23" height="23" rx="2.5" fill="url(#ug)" stroke="#ffe9d4"/><circle cx="741" cy="525" r="6" fill="none" stroke="#fff" stroke-width="1.7"/><rect x="740" y="521" width="2" height="7" fill="#fff"/></svg>
<svg style="left:438px;top:285px" width="182" height="53" viewBox="438 285 182 53"><path d="M450.4 290.9C454.5 290.3 461.8 290.1 471.3 290C480.8 289.9 494.8 290.0 507.5 290C520.2 290.0 537.7 289.8 547.4 290C557.1 290.2 560.7 290.4 565.5 291.2C570.3 291.9 573.1 293.2 576.4 294.5C579.7 295.8 581.9 297.9 585.5 299C589.1 300.1 594.3 300.0 598.2 300.8C602.1 301.6 606.4 302.1 609 303.6C611.6 305.1 612.7 307.2 613.6 309.9C614.5 312.6 614.5 316.9 614.5 319.9C614.5 322.9 614.8 326.2 613.6 328C612.4 329.8 612.8 330.2 607.2 330.8C601.6 331.4 590.6 331.6 580 331.7C569.4 331.8 555.9 331.6 543.8 331.7C531.7 331.8 519.6 332.0 507.5 332.2C495.4 332.4 479.4 332.7 471.3 332.6C463.2 332.5 461.9 332.8 458.6 331.7C455.3 330.6 453.6 328.3 451.3 326.2C449.0 324.1 446.4 321.9 445 319C443.6 316.1 443.4 312.2 443.2 309C443.0 305.8 443.4 302.6 444 300C444.6 297.4 445.7 295.1 446.8 293.6C447.9 292.1 446.3 291.5 450.4 290.9Z" fill="none" stroke="#ea1212" stroke-width="3.8" stroke-linejoin="round"/></svg>
<div style="left:995px;top:7px;width:16px;height:14px;border:1px solid;border-color:#fff #404040 #404040 #fff;box-shadow:inset -1px -1px 0 #808080,inset 1px 1px 0 #d4d0c8;background:#d4d0c8;"></div>
<div style="left:1011px;top:7px;width:16px;height:14px;border:1px solid;border-color:#fff #404040 #404040 #fff;box-shadow:inset -1px -1px 0 #808080,inset 1px 1px 0 #d4d0c8;background:#d4d0c8;"></div>
<div style="left:1029px;top:7px;width:16px;height:14px;border:1px solid;border-color:#fff #404040 #404040 #fff;box-shadow:inset -1px -1px 0 #808080,inset 1px 1px 0 #d4d0c8;background:#d4d0c8;"></div>
<div style="left:999px;top:16px;width:6px;height:2px;background:#000;"></div>
<div style="left:1014px;top:9px;width:9px;height:9px;border:1px solid #000;border-top-width:2px;"></div>
<svg style="left:1033px;top:10px" width="8" height="7"><path d="M0.5 0L7.5 7M7.5 0L0.5 7" stroke="#000" stroke-width="1.6"/></svg>
<svg style="left:1033px;top:587px" width="14" height="14"><path d="M13 1L1 13M13 5L5 13M13 9L9 13" stroke="#808080" stroke-width="1.4"/><path d="M14 1L2 13M14 5L6 13M14 9L10 13" stroke="#fff" stroke-width="1"/></svg>

</div></body></html>
